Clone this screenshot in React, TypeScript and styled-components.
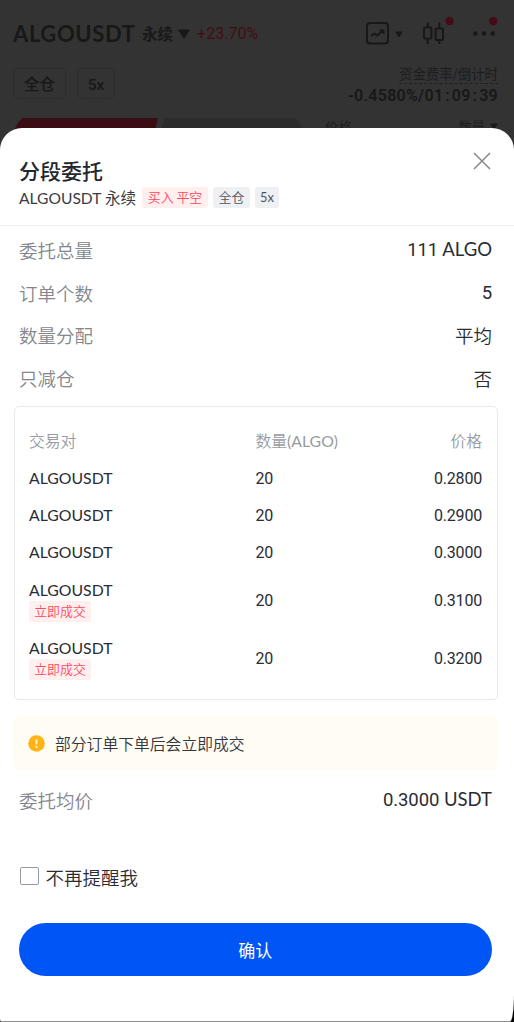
import React from 'react';
import styled, { createGlobalStyle } from 'styled-components';

const GlobalStyle = createGlobalStyle`
  * { box-sizing: border-box; }
  body { margin: 0; background: #333; overflow: hidden; }
`;

const cjk = '"Noto Sans CJK SC", sans-serif';
const latin = `Lato, ${cjk}`;
const digits = `Roboto, ${cjk}`;

const Screen = styled.div`
  width: 514px;
  height: 1022px;
  display: flex;
  flex-direction: column;
  background: #333;
  color: #181818;
  font-family: ${latin};
  overflow: hidden;
  white-space: nowrap;
`;

const Market = styled.header`
  height: 128px;
  flex: none;
  display: flex;
  flex-direction: column;
  padding: 20px 16px 0 13px;
`;

const TitleBar = styled.div`
  height: 28px;
  display: flex;
  align-items: center;
`;

const Pair = styled.span`
  width: 129px;
  font-size: 22px;
  font-weight: 700;
  line-height: 28px;
  letter-spacing: 0.6px;
`;

const Kind = styled.span`
  font: 700 15.5px/26px ${cjk};
  padding-bottom: 2px;
`;

const Caret = styled.svg<{ $left: number }>`
  flex: none;
  margin-left: ${p => p.$left}px;
`;

const Change = styled.span`
  margin-left: 7px;
  color: #430c16;
  font: 400 16px/28px ${digits};
  letter-spacing: 0.05px;
`;

const Tools = styled.div`
  display: flex;
  align-items: center;
  margin-left: auto;
  height: 32px;
`;

const SubBar = styled.div`
  height: 53px;
  display: flex;
  justify-content: space-between;
  margin-top: 17px;
`;

const Chips = styled.div`
  display: flex;
  gap: 11px;
  padding-top: 3px;
`;

const Chip = styled.div<{ $width: number }>`
  width: ${p => p.$width}px;
  height: 31px;
  border: 1px solid #2c2c2c;
  border-radius: 5px;
  text-align: center;
  font: 500 15.5px/32px ${digits};
`;

const Funding = styled.div`
  display: flex;
  flex-direction: column;
  align-items: flex-end;
`;

const FundingLabel = styled.div`
  height: 19px;
  border-bottom: 1px dashed #202020;
  font: 400 13.4px/16px ${cjk};
  color: #1d1d1f;
`;

const FundingValue = styled.div`
  display: flex;
  font: 600 16px/23px ${digits};
  letter-spacing: 0.28px;
`;

const Colon = styled.span`
  width: 8.5px;
  text-align: center;
`;

const TradeBar = styled.div`
  flex: 1;
  min-height: 0;
  display: flex;
  justify-content: space-between;
`;

const BookHead = styled.div`
  width: 173px;
  display: flex;
  align-items: flex-start;
  justify-content: space-between;
  font: 400 13.4px/17px ${cjk};
  color: #1d1d1f;
`;

const BookSort = styled.span`
  display: flex;
  align-items: center;
`;

const SheetBackdrop = styled.div`
  position: relative;
  flex: 1;
  min-height: 0;
  background: linear-gradient(transparent 0 50%, #000 50%);
`;

const Sheet = styled.main`
  height: 894px;
  display: flex;
  flex-direction: column;
  background: #fff;
  border-bottom: 1px solid #8d8d8d;
  border-radius: 22px 22px 4px 1px / 22px 22px 28px 3px;
  color: #292c34;
`;

const SheetHead = styled.div`
  height: 98px;
  flex: none;
  display: flex;
  justify-content: space-between;
  padding: 28px 23px 0 19px;
  border-bottom: 1px solid #eff0f5;
`;

const Title = styled.h1`
  margin: 0;
  font: 500 21px/29px ${cjk};
  color: #23262d;
`;

const PairLine = styled.div`
  height: 24px;
  display: flex;
  align-items: center;
  font-size: 15.6px;
  line-height: 24px;
  color: #3a3d45;
`;

const PairText = styled.span`
  width: 123px;
  padding-top: 1px;
`;

const Tag = styled.span<{ $width: number; $tone: 'red' | 'gray' }>`
  display: block;
  width: ${p => p.$width}px;
  height: 21px;
  border-radius: 3px;
  text-align: center;
  font: 350 12.9px/20px ${cjk};
  color: ${p => (p.$tone === 'red' ? '#ff4760' : '#51545c')};
  background: ${p => (p.$tone === 'red' ? '#ffefef' : '#eff0f4')};
  & + & { margin-left: 5px; }
`;

const Close = styled.button`
  width: 18px;
  height: 18px;
  margin-top: -4px;
  padding: 0;
  border: 0;
  background: none;
`;

const Details = styled.dl`
  margin: 4px 0 0;
  padding: 0 22px 0 19px;
`;

const Detail = styled.div`
  height: 42.6px;
  display: flex;
  justify-content: space-between;
`;

const Label = styled.dt`
  font: 350 18.5px/40px ${cjk};
  color: #83868d;
`;

const Value = styled.dd<{ $chinese?: boolean }>`
  margin: 0;
  font-family: ${p => (p.$chinese ? cjk : latin)};
  font-weight: ${p => (p.$chinese ? 350 : 400)};
  font-size: 18.5px;
  line-height: ${p => (p.$chinese ? 41 : 39)}px;
`;

const Num = styled.span`
  font-family: ${digits};
  letter-spacing: -0.1px;
`;

const Orders = styled.section`
  height: 294px;
  flex: none;
  margin: 6px 16px 0 13.5px;
  padding: 15px 15px 0 14.5px;
  border: 1px solid #e9eaee;
  border-radius: 5px;
`;

const OrderRow = styled.div<{ $height: number; $head?: boolean }>`
  height: ${p => p.$height}px;
  display: grid;
  grid-template-columns: 226.5px 1fr auto;
  align-items: center;
  font-size: 16px;
  line-height: 21px;
  color: ${p => (p.$head ? '#989ba1' : '#292c34')};
`;

const Name = styled.span`
  display: block;
  margin-bottom: 2px;
  font-size: 15.8px;
  line-height: 19px;
`;

const HeadCell = styled.div`
  font: 350 15.8px/21px ${cjk};
`;

const Unit = styled.span`
  font-family: ${latin};
  font-weight: 400;
`;

const Figure = styled.div`
  font-family: ${digits};
  letter-spacing: -0.2px;
`;

const Notice = styled.div`
  height: 54px;
  flex: none;
  display: flex;
  align-items: center;
  gap: 10px;
  margin: 16px 16px 6px 13px;
  padding: 2px 15px 0;
  border-radius: 8px;
  background: #fffcf3;
  font: 350 15.8px/24px ${cjk};
  color: #33363d;
`;

const NoticeIcon = styled.svg`
  margin-top: -2px;
  flex: none;
`;

const Remind = styled.label`
  height: 28px;
  display: flex;
  align-items: center;
  gap: 7px;
  margin: 40px 19px 0 20px;
  font: 350 18.5px/28px ${cjk};
`;

const Box = styled.span`
  width: 18.5px;
  height: 18.5px;
  margin-top: -2px;
  border: 1px solid #989aa2;
  border-radius: 2px;
`;

const Confirm = styled.button`
  height: 53px;
  flex: none;
  margin: 32px 22px 0 18.5px;
  padding: 0;
  border: 0;
  border-radius: 27px;
  background: #0056f4;
  color: #fff;
  font: 400 17px/53px ${cjk};
`;

const orders = [
  { price: '0.2800', instant: false },
  { price: '0.2900', instant: false },
  { price: '0.3000', instant: false },
  { price: '0.3100', instant: true },
  { price: '0.3200', instant: true },
];

const Down = ({ size, left }: { size: number; left: number }) => (
  <Caret $left={left} width={size} height={size * 0.85} viewBox="0 0 12 10">
    <path d="M1 0.5h10q1 0 .4 1L6.8 9q-.8 1-1.6 0L.6 1.5Q0 .5 1 .5Z" fill="#181818" />
  </Caret>
);

export default function App() {
  return (
    <Screen>
      <GlobalStyle />
      <Market>
        <TitleBar>
          <Pair>ALGOUSDT</Pair>
          <Kind>永续</Kind>
          <Down size={12} left={5} />
          <Change>+23.70%</Change>
          <Tools>
            <svg width="24" height="24" viewBox="0 0 24 24" fill="none" stroke="#181818" strokeWidth="2" strokeLinejoin="round">
              <rect x="1" y="1" width="21" height="20.6" rx="3" />
              <path d="M5 14l3.500-2.500 2.500 2 6-4.500M13.500 8.500h4v3.500" />
            </svg>
            <Down size={8} left={5} />
            <svg width="95" height="36" viewBox="1 0 95 36">
              <g fill="none" stroke="#181818" strokeWidth="2">
                <rect x="22" y="11.5" width="7.400" height="11" rx="1" />
                <rect x="33.600" y="12.500" width="7.400" height="11.500" rx="1" />
                <path d="M25.700 6.500v5M25.700 22.500v5.500M37.300 6.500v6M37.300 24v4" />
              </g>
              <g fill="#181818">
                <circle cx="73.300" cy="17.500" r="2.200" />
                <circle cx="82" cy="17.500" r="2.200" />
                <circle cx="90.700" cy="17.500" r="2.200" />
              </g>
              <g fill="#430c16">
                <circle cx="47.600" cy="5" r="4.200" />
                <circle cx="91.300" cy="5" r="4.200" />
              </g>
            </svg>
          </Tools>
        </TitleBar>
        <SubBar>
          <Chips>
            <Chip $width={53}>全仓</Chip>
            <Chip $width={38}>5x</Chip>
          </Chips>
          <Funding>
            <FundingLabel>资金费率/倒计时</FundingLabel>
            <FundingValue>
              -0.4580%/01<Colon>:</Colon>09<Colon>:</Colon>39
            </FundingValue>
          </Funding>
        </SubBar>
        <TradeBar>
          <svg width="290" height="14" viewBox="0 0 290 14">
            <path d="M1 14Q5 -2 18 -2H145L142 14Z" fill="#3a0c14" />
            <path d="M152-2H276Q286-2 290 14H148Z" fill="#2b2b2c" />
          </svg>
          <BookHead>
            <span>价格</span>
            <BookSort>数量<Down size={8} left={5} /></BookSort>
          </BookHead>
        </TradeBar>
      </Market>
      <SheetBackdrop>
        <Sheet>
          <SheetHead>
            <div>
              <Title>分段委托</Title>
              <PairLine>
                <PairText>ALGOUSDT 永续</PairText>
                <Tag $width={66} $tone="red">买入 平空</Tag>
                <Tag $width={37} $tone="gray">全仓</Tag>
                <Tag $width={24} $tone="gray"><Unit>5x</Unit></Tag>
              </PairLine>
            </div>
            <Close aria-label="关闭">
              <svg width="18" height="18" viewBox="0 0 18 18" stroke="#85878c" strokeWidth="1.5">
                <path d="M1 1L17 17M17 1L1 17" />
              </svg>
            </Close>
          </SheetHead>
          <Details>
            <Detail><Label>委托总量</Label><Value><Num>111</Num> ALGO</Value></Detail>
            <Detail><Label>订单个数</Label><Value><Num>5</Num></Value></Detail>
            <Detail><Label>数量分配</Label><Value $chinese>平均</Value></Detail>
            <Detail><Label>只减仓</Label><Value $chinese>否</Value></Detail>
          </Details>
          <Orders>
            <OrderRow $height={37} $head>
              <HeadCell>交易对</HeadCell>
              <HeadCell>数量<Unit>(ALGO)</Unit></HeadCell>
              <HeadCell>价格</HeadCell>
            </OrderRow>
            {orders.map(o => (
              <OrderRow key={o.price} $height={o.instant ? 58.3 : 37.4}>
                <div>
                  <Name>ALGOUSDT</Name>
                  {o.instant && <Tag $width={62} $tone="red">立即成交</Tag>}
                </div>
                <Figure>20</Figure>
                <Figure>{o.price}</Figure>
              </OrderRow>
            ))}
          </Orders>
          <Notice>
            <NoticeIcon width="17" height="17" viewBox="0 0 17 17">
              <circle cx="8.500" cy="8.500" r="8.300" fill="#ffb414" />
              <path d="M8.500 4.500v5M8.500 11v1.700" stroke="#fff3ea" strokeWidth="1.800" />
            </NoticeIcon>
            部分订单下单后会立即成交
          </Notice>
          <Details>
            <Detail><Label>委托均价</Label><Value><Num>0.3000</Num> USDT</Value></Detail>
          </Details>
          <Remind><Box />不再提醒我</Remind>
          <Confirm>确认</Confirm>
        </Sheet>
      </SheetBackdrop>
    </Screen>
  );
}
